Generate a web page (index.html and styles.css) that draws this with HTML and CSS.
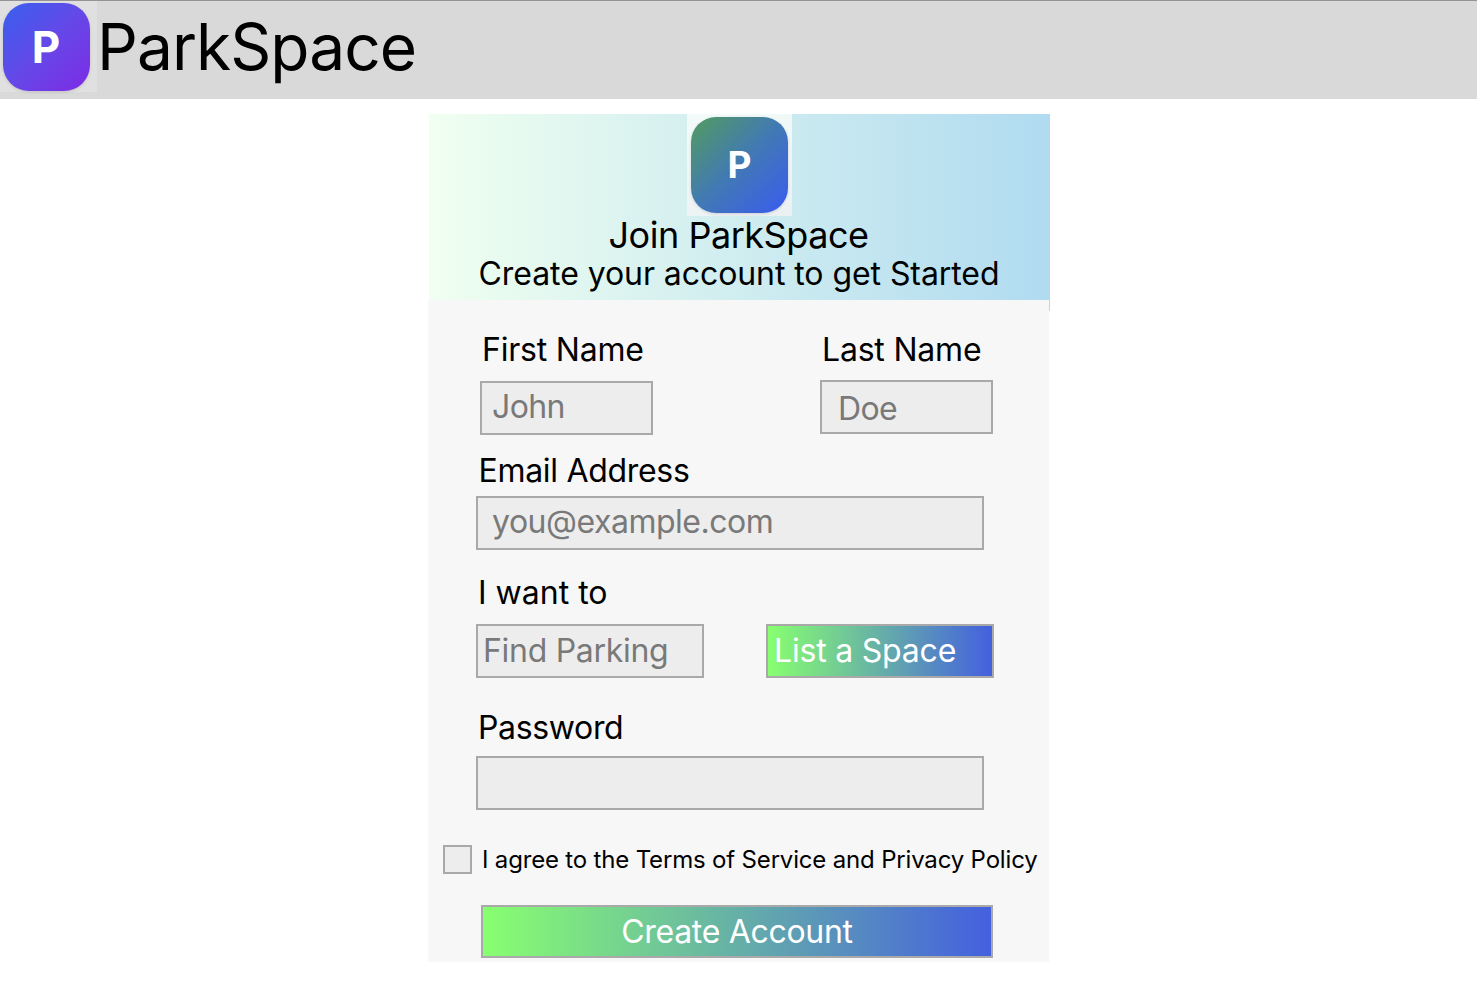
FILE: index.html
```html
<!DOCTYPE html>
<html lang="en">
<head>
<meta charset="utf-8">
<title>ParkSpace</title>
<link rel="stylesheet" href="styles.css">
</head>
<body>
<header class="topbar">
  <div class="brand-frame"><div class="brand-tile">P</div></div>
  <div class="brand-name">ParkSpace</div>
</header>
<main class="card">
  <section class="hero">
    <div class="hero-frame"><div class="hero-tile">P</div></div>
    <h1 class="hero-title">Join ParkSpace</h1>
    <p class="hero-sub">Create your account to get Started</p>
  </section>
  <form class="form">
    <div class="names">
      <div class="first">
        <div class="label">First Name</div>
        <div class="box small">John</div>
      </div>
      <div class="last">
        <div class="label">Last Name</div>
        <div class="box small">Doe</div>
      </div>
    </div>
    <div class="label email-label">Email Address</div>
    <div class="box wide email">you@example.com</div>
    <div class="label want-label">I want to</div>
    <div class="choices">
      <div class="box choice">Find Parking</div>
      <div class="box choice active">List a Space</div>
    </div>
    <div class="label pass-label">Password</div>
    <div class="box wide"></div>
    <div class="terms">
      <div class="check"></div>
      <div class="terms-text">I agree to the Terms of Service and Privacy Policy</div>
    </div>
    <div class="box submit">Create Account</div>
  </form>
</main>
</body>
</html>
```
FILE: styles.css
```css
* { box-sizing: border-box; }
body {
  margin: 0;
  background: #fff;
  color: #000;
  font-family: Inter, "Liberation Sans", sans-serif;
  overflow: hidden;
}
.topbar {
  display: flex;
  height: 99px;
  background: #d9d9d9;
  border-top: 1px solid #949294;
}
.brand-frame {
  width: 97px;
  height: 91px;
  padding: 2.4px 0 0 2.6px;
  background: #e0e0e0;
}
.brand-tile {
  width: 87px;
  height: 88px;
  border-radius: 26px;
  background: linear-gradient(135deg, #3b5eee 3%, #6548e8 50%, #7b2de5 95%);
  box-shadow: 0 1px 3px rgba(0, 0, 0, .14);
  color: #fff;
  font-size: 44px;
  font-weight: 700;
  line-height: 88px;
  text-align: center;
}
.brand-name {
  font-size: 64px;
  line-height: 91px;
  letter-spacing: -.95px;
  white-space: nowrap;
}
.card {
  width: 622px;
  margin: 15px 0 0 428px;
}
.hero {
  display: flex;
  flex-direction: column;
  align-items: center;
  height: 197px;
  margin-left: 1px;
  background: linear-gradient(90deg, #f0fff0 0%, #b0dbf0 100%);
}
.hero-frame {
  width: 105px;
  height: 102px;
  padding: 3px 0 0 4px;
  background: linear-gradient(160deg, #f3fbfa, #ebf1f3);
}
.hero-tile {
  width: 97px;
  height: 96px;
  border-radius: 25px;
  background: linear-gradient(135deg, #50966d 8%, #4179b5 50%, #3b60e6 92%);
  box-shadow: 0 1px 3px rgba(0, 0, 0, .14);
  color: #fff;
  font-size: 37px;
  font-weight: 700;
  line-height: 96px;
  text-align: center;
}
.hero-title {
  margin: 0;
  padding-right: 2px;
  font-size: 36px;
  font-weight: 400;
  line-height: 38px;
  letter-spacing: -.47px;
}
.hero-sub {
  margin: 0;
  padding-right: 1px;
  font-size: 32px;
  line-height: 40px;
  letter-spacing: -.07px;
  white-space: nowrap;
}
.form {
  position: relative;
  width: 621px;
  height: 662px;
  margin-top: -11px;
  padding: 30px 0 0 48px;
  background: #f7f7f7;
}
.label {
  font-size: 32px;
  line-height: 40px;
  letter-spacing: -.2px;
  white-space: nowrap;
  padding-left: 2px;
}
.names { display: flex; }
.first { width: 340px; padding-left: 4px; }
.last { padding-left: 4px; }
.box {
  height: 54px;
  border: 2px solid #a9a9a9;
  background: #ededed;
  color: #797979;
  font-size: 32px;
  line-height: 49px;
  letter-spacing: -.3px;
  white-space: nowrap;
}
.small { width: 173px; letter-spacing: -.6px; }
.first .small { margin-top: 11px; padding-left: 10px; line-height: 48px; }
.last .small { margin-top: 10px; padding-left: 16px; line-height: 53px; }
.wide { width: 508px; }
.email-label { margin-top: 16px; padding-left: 2.5px; letter-spacing: -.3px; }
.email { margin-top: 5px; padding-left: 14px; line-height: 47px; letter-spacing: -.48px; }
.want-label { margin-top: 23px; letter-spacing: 0; }
.choices { display: flex; gap: 62px; margin-top: 11px; }
.choice { width: 228px; padding-left: 5px; }
.active, .submit {
  color: #fff;
  background: linear-gradient(90deg, #88ff70, #4460df) padding-box;
}
.active { padding-left: 6px; letter-spacing: -.2px; }
.pass-label { margin-top: 30px; letter-spacing: -.35px; }
.pass-label + .wide { margin-top: 8px; }
.terms {
  display: flex;
  gap: 10px;
  align-items: center;
  margin: 35px 0 0 -33px;
}
.check {
  width: 29px;
  height: 29px;
  border: 2px solid #a9a9a9;
  background: #ededed;
}
.terms-text {
  font-size: 24px;
  line-height: 29px;
  letter-spacing: -.175px;
  white-space: nowrap;
}
.submit {
  width: 512px;
  height: 53px;
  margin: 31px 0 0 5px;
  text-align: center;
}
```
